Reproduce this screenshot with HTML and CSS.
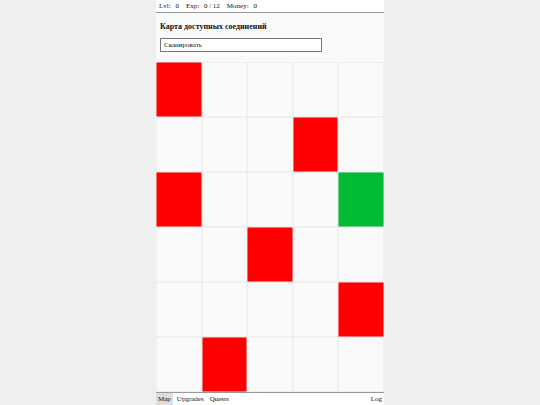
FILE: index.html
```html
<!DOCTYPE html>
<html>
<head>
<meta charset="utf-8">
<link rel="stylesheet" href="styles.css">
</head>
<body>
<div class="app">
  <div class="stats">
    <span>Lvl: <b class="v">0</b></span>
    <span>Exp: <b class="v">0 / 12</b></span>
    <span>Money: <b class="v">0</b></span>
  </div>
  <div class="head">
    <div class="title">Карта доступных соединений</div>
    <div class="scan">Сканировать</div>
  </div>
  <div class="grid">
    <div class="c r"></div><div class="c"></div><div class="c"></div><div class="c"></div><div class="c"></div>
    <div class="c"></div><div class="c"></div><div class="c"></div><div class="c r"></div><div class="c"></div>
    <div class="c r"></div><div class="c"></div><div class="c"></div><div class="c"></div><div class="c g"></div>
    <div class="c"></div><div class="c"></div><div class="c r"></div><div class="c"></div><div class="c"></div>
    <div class="c"></div><div class="c"></div><div class="c"></div><div class="c"></div><div class="c r"></div>
    <div class="c"></div><div class="c r"></div><div class="c"></div><div class="c"></div><div class="c"></div>
  </div>
  <div class="nav">
    <span class="tab active">Map</span>
    <span class="tab">Upgrades</span>
    <span class="tab">Quests</span>
    <span class="spacer"></span>
    <span class="tab">Log</span>
  </div>
</div>
</body>
</html>
```
FILE: styles.css
```css
html, body {
  margin: 0;
  padding: 0;
  height: 100%;
  background: #efefef;
  font-family: "Liberation Serif", "Times New Roman", serif;
  color: #111;
}
.app {
  width: 228px;
  height: 405px;
  margin: 0 auto;
  background: #fafafa;
  display: flex;
  flex-direction: column;
}
.stats {
  height: 12px;
  flex: none;
  background: #fff;
  border-bottom: 1px solid #999;
  font-size: 7px;
  line-height: 12px;
  padding-left: 3px;
  display: flex;
  gap: 7px;
}
.stats .v {
  font-weight: normal;
  margin-left: 3px;
}
.head {
  height: 49px;
  flex: none;
  padding: 9px 4px 0 4px;
  box-sizing: border-box;
}
.title {
  font-size: 8px;
  font-weight: bold;
  line-height: 10px;
}
.scan {
  margin-top: 6px;
  width: 162px;
  height: 14px;
  box-sizing: border-box;
  border: 1px solid #777;
  background: #fff;
  font-size: 7px;
  line-height: 12px;
  padding-left: 3px;
}
.grid {
  height: 330px;
  flex: none;
  display: grid;
  grid-template-columns: repeat(5, 1fr);
  grid-template-rows: repeat(6, 1fr);
}
.c {
  background: #fafafa;
  box-shadow: inset 0 0 0 0.5px #e6e6e6;
}
.c.r { background: #ff0000; }
.c.g { background: #00bb33; }
.nav {
  height: 12px;
  flex: none;
  border-top: 1px solid #999;
  background: #fff;
  display: flex;
  font-size: 7px;
  line-height: 12px;
}
.tab {
  padding: 0 2px;
}
.tab + .tab {
  margin-left: 2px;
}
.tab.active {
  background: #dddddd;
}
.spacer { flex: 1; }
```
